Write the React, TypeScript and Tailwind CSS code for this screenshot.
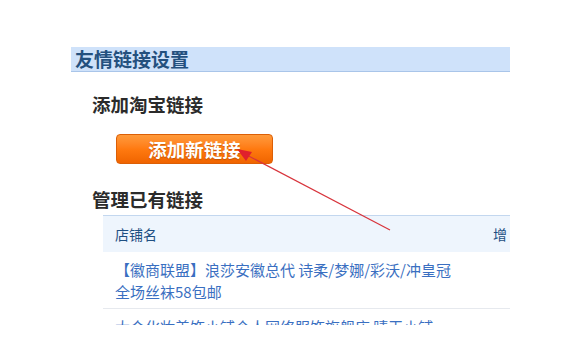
import React from "react";

export default function App() {
  const font = { fontFamily: '"Noto Sans CJK SC", "Noto Sans", sans-serif' };
  return (
    <div className="w-[588px] h-[345px] bg-white overflow-hidden" style={font}>
      <div className="relative ml-[71px] pt-[47px]">
        <div className="w-[439px] h-[278px] overflow-hidden flex flex-col">
          <div className="h-[25px] shrink-0 bg-[#cfe2fa] border-b border-[#a9c5e9] pl-[4px] text-[19px] leading-[24px] font-bold text-[#24507e]">
            友情链接设置
          </div>
          <div className="mt-[19px] pl-[21px] text-[18.5px] leading-[26px] font-bold text-[#2b2b2b]">
            添加淘宝链接
          </div>
          <div className="mt-[17px] ml-[45px]">
            <button className="w-[157px] h-[30px] rounded-[4px] border border-[#dc5f06] bg-gradient-to-b from-[#ff9a3a] via-[#ff7a10] to-[#f06400] text-white text-[18.5px] font-bold leading-[28px] [text-shadow:0_1px_1px_rgba(150,60,0,0.5)]">
              添加新链接
            </button>
          </div>
          <div className="mt-[22px] pl-[21px] text-[18.5px] leading-[26px] font-bold text-[#2b2b2b]">
            管理已有链接
          </div>
          <div className="mt-[3px] ml-[32px] w-[407px]">
            <div className="grid grid-cols-[378px_1fr] h-[37px] items-center bg-[#eef5fd] border-t border-[#c3d7ef] text-[14px] text-[#1e4f82]">
              <div className="pl-[12px]">店铺名</div>
              <div className="pl-[12px] whitespace-nowrap">增</div>
            </div>
            <div className="grid grid-cols-[378px_1fr] border-b border-[#e6e9ee] pt-[7px] pb-[5px] text-[15px] leading-[22px] text-[#3a6fc1]">
              <div className="pl-[12px]">
                【徽商联盟】浪莎安徽总代 诗柔/梦娜/彩沃/冲皇冠
                <br />
                全场丝袜58包邮
              </div>
              <div />
            </div>
            <div className="grid grid-cols-[378px_1fr] pt-[7px] text-[15px] leading-[22px] text-[#3a6fc1]">
              <div className="pl-[12px] whitespace-nowrap">大众化妆美饰小铺个人网络服饰旗舰店 晴天小铺</div>
              <div />
            </div>
          </div>
        </div>
        <svg
          className="absolute left-0 top-[47px] pointer-events-none"
          width="439"
          height="278"
          viewBox="0 0 439 278"
        >
          <line x1="319" y1="183" x2="172" y2="106" stroke="#d8343c" strokeWidth="1.2" />
          <polygon points="166,102 181,105 175,114" fill="#e0202c" />
        </svg>
      </div>
    </div>
  );
}
